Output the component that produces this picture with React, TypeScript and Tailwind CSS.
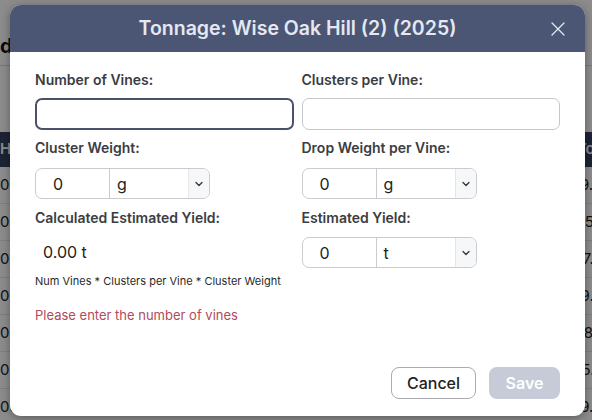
import { X, ChevronDown } from 'lucide-react'

const rows = [
  { date: '09/12/2025', tons: '9.42' },
  { date: '09/13/2025', tons: '5.10' },
  { date: '09/15/2025', tons: '7.88' },
  { date: '09/16/2025', tons: '9.05' },
  { date: '09/18/2025', tons: '8.31' },
  { date: '09/19/2025', tons: '5.76' },
  { date: '09/21/2025', tons: '9.64' }
]

function Label({ children }: { children: React.ReactNode }) {
  return <div className="h-[20px] text-[14px] leading-[20px] font-semibold text-[#3b3d42]">{children}</div>
}

function UnitInput({ unit }: { unit: string }) {
  return (
    <div className="flex h-[31px] w-[175px] overflow-hidden rounded-[7px] border border-[#c9cbd0] bg-white text-[16px] text-[#222]">
      <div className="flex w-[73px] items-center pl-[17px]">0</div>
      <div className="flex w-[79px] items-center border-l border-[#c9cbd0] pl-[7px]">{unit}</div>
      <div className="flex flex-1 items-center justify-center border-l border-[#e4e6ea] bg-[#f6f7f9]">
        <ChevronDown size={12} strokeWidth={2.5} className="text-[#333]" />
      </div>
    </div>
  )
}

export default function App() {
  return (
    <div className="relative h-[420px] w-[592px] overflow-hidden bg-white font-[Inter,sans-serif]">
      {/* page behind the dialog */}
      <div className="w-[612px]">
        <div className="h-[66px] border-b border-[#d9d9d9] pt-[34px] text-[20px] leading-[24px] font-bold text-[#111]">
          dashboard
        </div>
        <div className="mt-[66px] flex h-[35px] items-center justify-between bg-[#34405f] text-[15px] font-semibold text-white">
          <span>Harvest Date</span>
          <span>nTons</span>
        </div>
        {rows.map((r) => (
          <div key={r.date} className="flex h-[37px] items-center justify-between border-b border-[#e5e5e5] text-[15px] text-[#222]">
            <span>{r.date}</span>
            <span>{r.tons}</span>
          </div>
        ))}
      </div>

      {/* overlay */}
      <div className="absolute inset-0 bg-black/45" />

      {/* dialog */}
      <div className="absolute top-[5px] left-[10px] w-[575px] overflow-hidden rounded-[11px] bg-white shadow-[0_2px_10px_rgba(0,0,0,0.35)]">
        <div className="relative flex h-[47px] items-center justify-center bg-[#4b5675]">
          <h2 className="text-[19.5px] font-semibold text-[#e5e8f0]">Tonnage: Wise Oak Hill (2) (2025)</h2>
          <button className="absolute right-[15px] top-[12px] text-[#e5e8f0]">
            <X size={24} strokeWidth={1.3} />
          </button>
        </div>

        <div className="px-[25px] pt-[18px] pb-[17px]">
          <div className="grid grid-cols-2 gap-x-[8px]">
            <div className="flex flex-col">
              <Label>Number of Vines:</Label>
              <input className="mt-[8px] h-[32px] rounded-[7px] border-2 border-[#4b5169] bg-white outline-none" />
              <div className="mt-[8px]">
                <Label>Cluster Weight:</Label>
              </div>
              <div className="mt-[10px]">
                <UnitInput unit="g" />
              </div>
              <div className="mt-[9px]">
                <Label>Calculated Estimated Yield:</Label>
              </div>
              <div className="mt-[12px] pl-[8px] text-[16px] leading-[24px] text-[#222]">0.00 t</div>
              <div className="mt-[9px] whitespace-nowrap text-[11px] leading-[16px] text-[#2a2a2a]">
                Num Vines * Clusters per Vine * Cluster Weight
              </div>
              <div className="mt-[16px] text-[13px] leading-[20px] text-[#b24a5c]">Please enter the number of vines</div>
            </div>

            <div className="flex flex-col">
              <Label>Clusters per Vine:</Label>
              <input className="mt-[8px] h-[32px] rounded-[7px] border border-[#c4c6cb] bg-white outline-none" />
              <div className="mt-[8px]">
                <Label>Drop Weight per Vine:</Label>
              </div>
              <div className="mt-[10px]">
                <UnitInput unit="g" />
              </div>
              <div className="mt-[9px]">
                <Label>Estimated Yield:</Label>
              </div>
              <div className="mt-[9px]">
                <UnitInput unit="t" />
              </div>
            </div>
          </div>

          <div className="mt-[42px] flex justify-end gap-[13px]">
            <button className="h-[32px] w-[85px] rounded-[8px] border border-[#a9abb0] bg-white text-[16px] font-medium text-[#222]">
              Cancel
            </button>
            <button className="h-[32px] w-[71px] rounded-[8px] bg-[#c6cbd7] text-[16px] font-semibold text-white">
              Save
            </button>
          </div>
        </div>
      </div>
    </div>
  )
}
